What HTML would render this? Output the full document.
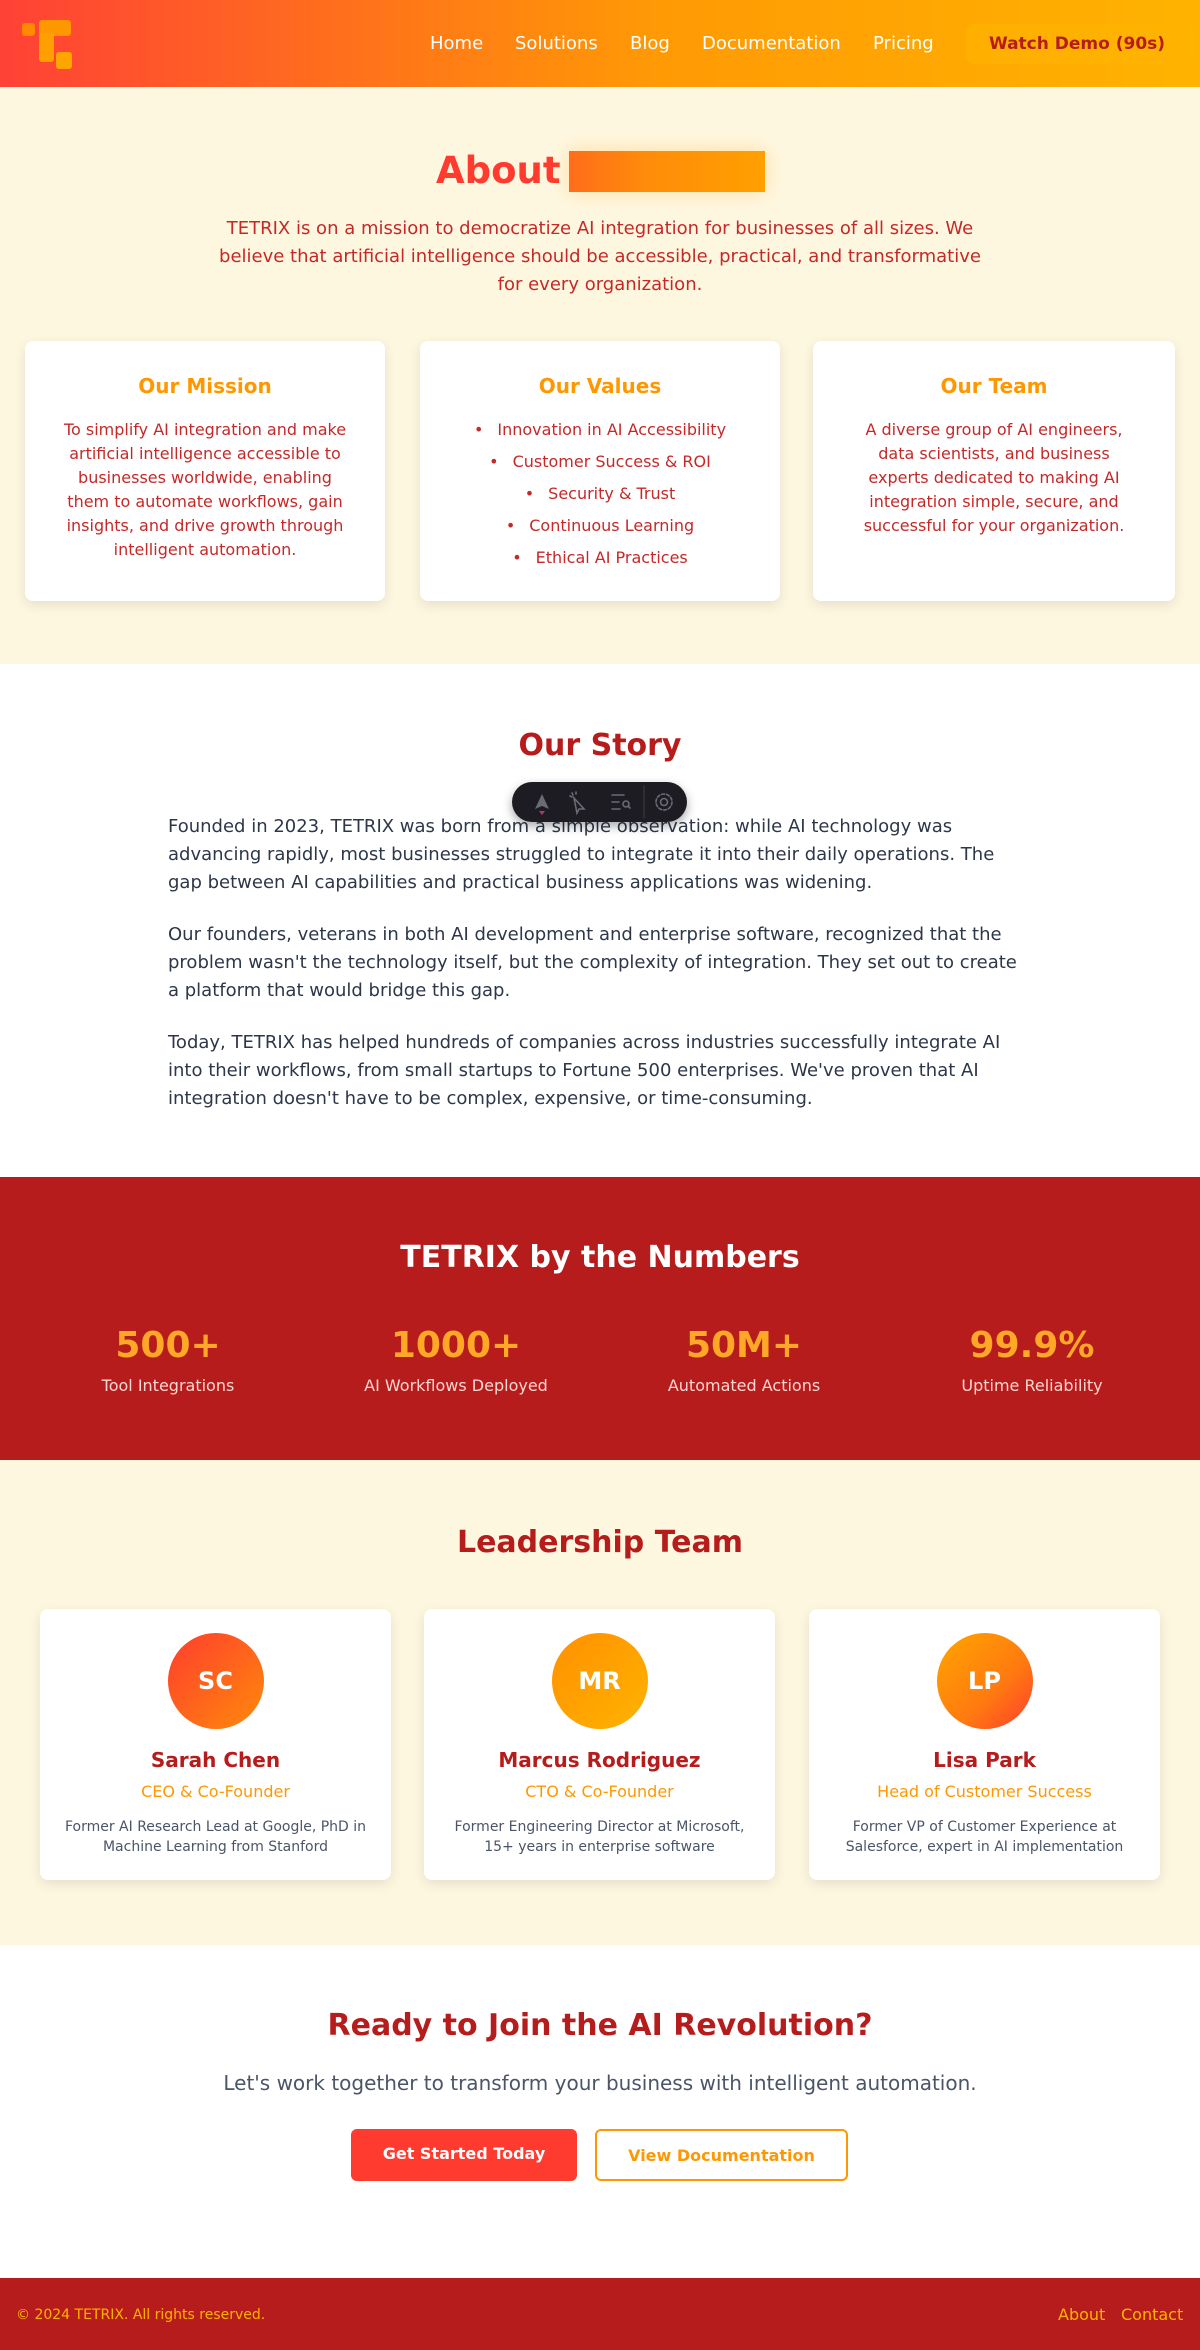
<!DOCTYPE html>
<html><head><meta charset="utf-8"><style>
*{margin:0;padding:0;box-sizing:border-box}
body{width:1200px;height:2350px;font-family:"DejaVu Sans","Liberation Sans",sans-serif;background:#fff;position:relative;overflow:hidden}
.abs{position:absolute}
.c{text-align:center}
header{position:absolute;left:0;top:0;width:1200px;height:87px;background:linear-gradient(90deg,#ff4136 0%,#ff6a1f 25%,#ff9a05 55%,#ffb300 100%);box-shadow:0 2px 6px rgba(0,0,0,.12)}
nav a{position:absolute;top:33px;color:#fff;font-size:18px;text-decoration:none}
.demo{position:absolute;left:966px;top:24px;width:232px;height:40px;border-radius:8px;background:rgba(255,180,0,.55);color:#b71c1c;font-weight:bold;font-size:17px;text-align:center;line-height:40px;padding-right:10px}
.s1{position:absolute;top:87px;left:0;width:1200px;height:577px;background:#fef7e0}
.card{position:absolute;background:#fff;border-radius:8px;box-shadow:0 4px 12px rgba(0,0,0,.1);text-align:center}
.card h3{color:#ff9800;font-size:20px;margin-top:33px}
.card p,.card li{color:#c62828;font-size:16px;line-height:24px}
.card ul{list-style:none}
.card li{line-height:32px}
.card li:before{content:"•";margin-right:14px}
.story p{position:absolute;left:168px;width:860px;font-size:18px;line-height:28px;color:#2d3748}
.num{position:absolute;top:1177px;left:0;width:1200px;height:283px;background:#b71c1c}
.col{position:absolute;top:1322px;width:288px;text-align:center}
.col b{display:block;font-size:36px;color:#ffa726;line-height:48px}
.col span{display:block;color:#ffd6d0;font-size:16px;margin-top:6px}
.s4{position:absolute;top:1460px;left:0;width:1200px;height:485px;background:#fef7e0}
.lc{position:absolute;top:1609px;width:351px;height:271px;background:#fff;border-radius:8px;box-shadow:0 4px 12px rgba(0,0,0,.1);text-align:center}
.av{width:96px;height:96px;border-radius:50%;margin:24px auto 0;color:#fff;font-weight:bold;font-size:24px;line-height:96px}
.lc h4{color:#b71c1c;font-size:20px;margin-top:19px}
.lc .r{color:#ff9800;font-size:16px;margin-top:10px}
.lc .b{color:#4a5568;font-size:14px;line-height:20px;margin-top:16px;padding:0 20px}
footer{position:absolute;top:2278px;left:0;width:1200px;height:72px;background:#b71c1c;color:#ffb300}
h2{position:absolute;left:0;width:1200px;text-align:center;font-size:30px;font-weight:bold}
</style></head><body>
<header>
<svg class="abs" style="left:22px;top:20px" width="54" height="52" viewBox="0 0 54 52">
<rect x="0" y="3" width="13" height="13" rx="3" fill="#ff8a00"/>
<rect x="17" y="0" width="32" height="16" rx="3" fill="#ff9800"/>
<rect x="17" y="13" width="15" height="29" rx="3" fill="#ffa000"/>
<rect x="34" y="32" width="16" height="17" rx="3" fill="#ffa500"/>
</svg>
<nav>
<a style="left:430px">Home</a><a style="left:515px">Solutions</a><a style="left:630px">Blog</a><a style="left:702px">Documentation</a><a style="left:873px">Pricing</a>
</nav>
<div class="demo">Watch Demo (90s)</div>
</header>

<div class="s1"></div>
<div class="abs" style="left:436px;top:149px;font-size:37px;font-weight:bold;color:#ff3b30">About</div>
<div class="abs" style="left:569px;top:151px;width:196px;height:41px;background:linear-gradient(90deg,#ff6d1a,#ff8c0a 40%,#ffa000);box-shadow:0 0 20px rgba(255,160,0,.3)"></div>
<div class="abs c" style="left:215px;top:215px;width:770px;font-size:18px;line-height:28px;color:#c62828">TETRIX is on a mission to democratize AI integration for businesses of all sizes. We believe that artificial intelligence should be accessible, practical, and transformative for every organization.</div>

<div class="card" style="left:25px;top:341px;width:360px;height:260px">
<h3>Our Mission</h3>
<p style="margin:20px 34px 0">To simplify AI integration and make artificial intelligence accessible to businesses worldwide, enabling them to automate workflows, gain insights, and drive growth through intelligent automation.</p>
</div>
<div class="card" style="left:420px;top:341px;width:360px;height:260px">
<h3>Our Values</h3>
<ul style="margin-top:16px"><li>Innovation in AI Accessibility</li><li>Customer Success &amp; ROI</li><li>Security &amp; Trust</li><li>Continuous Learning</li><li>Ethical AI Practices</li></ul>
</div>
<div class="card" style="left:813px;top:341px;width:362px;height:260px">
<h3>Our Team</h3>
<p style="margin:20px 40px 0">A diverse group of AI engineers, data scientists, and business experts dedicated to making AI integration simple, secure, and successful for your organization.</p>
</div>

<h2 style="top:728px;color:#b71c1c">Our Story</h2>
<div class="story">
<p style="top:813px">Founded in 2023, TETRIX was born from a simple observation: while AI technology was advancing rapidly, most businesses struggled to integrate it into their daily operations. The gap between AI capabilities and practical business applications was widening.</p>
<p style="top:921px">Our founders, veterans in both AI development and enterprise software, recognized that the problem wasn't the technology itself, but the complexity of integration. They set out to create a platform that would bridge this gap.</p>
<p style="top:1029px">Today, TETRIX has helped hundreds of companies across industries successfully integrate AI into their workflows, from small startups to Fortune 500 enterprises. We've proven that AI integration doesn't have to be complex, expensive, or time-consuming.</p>
</div>
<div class="abs" style="left:512px;top:782px;width:175px;height:40px;border-radius:20px;background:#1c1c22;box-shadow:0 4px 10px rgba(0,0,0,.35)">
<svg width="175" height="40" viewBox="0 0 175 40" fill="none" stroke="#6b6b74" stroke-width="1.6" stroke-linecap="round">
<path d="M23 27 L30 12 L37 27 L30 24 Z" fill="#6b6b74" stroke="none"/><path d="M27 29 L33 29 L30 33Z" fill="#b03a6a" stroke="none"/>
<path d="M62 16 L72 27 L67 27 L65 31 Z"/><path d="M58 14 l2 1 M60 11 l1 2 M64 10 v2"/>
<path d="M100 13 h12 M100 20 h7 M100 27 h8"/><circle cx="114" cy="22" r="3"/><path d="M116 24 l2 2"/>
<path d="M132 4 V36" stroke="#333"/>
<circle cx="152" cy="20" r="3.5"/><circle cx="152" cy="20" r="8" stroke-dasharray="3 2"/>
</svg></div>

<div class="num"></div>
<h2 style="top:1240px;color:#fff">TETRIX by the Numbers</h2>
<div class="col" style="left:24px"><b>500+</b><span>Tool Integrations</span></div>
<div class="col" style="left:312px"><b>1000+</b><span>AI Workflows Deployed</span></div>
<div class="col" style="left:600px"><b>50M+</b><span>Automated Actions</span></div>
<div class="col" style="left:888px"><b>99.9%</b><span>Uptime Reliability</span></div>

<div class="s4"></div>
<h2 style="top:1525px;color:#b71c1c">Leadership Team</h2>
<div class="lc" style="left:40px"><div class="av" style="background:linear-gradient(135deg,#ff3d2e,#ff8a0a)">SC</div><h4>Sarah Chen</h4><div class="r">CEO &amp; Co-Founder</div><div class="b">Former AI Research Lead at Google, PhD in Machine Learning from Stanford</div></div>
<div class="lc" style="left:424px"><div class="av" style="background:linear-gradient(135deg,#ff9000,#ffb300)">MR</div><h4>Marcus Rodriguez</h4><div class="r">CTO &amp; Co-Founder</div><div class="b">Former Engineering Director at Microsoft, 15+ years in enterprise software</div></div>
<div class="lc" style="left:809px"><div class="av" style="background:linear-gradient(135deg,#ffa500,#ff7a10 60%,#ff3d2e)">LP</div><h4>Lisa Park</h4><div class="r">Head of Customer Success</div><div class="b">Former VP of Customer Experience at Salesforce, expert in AI implementation</div></div>

<h2 style="top:2008px;color:#b71c1c">Ready to Join the AI Revolution?</h2>
<div class="abs c" style="left:0;top:2071px;width:1200px;font-size:20px;color:#4a5568">Let's work together to transform your business with intelligent automation.</div>
<div class="abs c" style="left:351px;top:2129px;width:226px;height:52px;background:#ff3b30;border-radius:6px;color:#fff;font-weight:bold;font-size:16px;line-height:50px">Get Started Today</div>
<div class="abs c" style="left:595px;top:2129px;width:253px;height:52px;border:2px solid #ff9800;border-radius:6px;color:#ff9800;font-weight:bold;font-size:16px;line-height:50px">View Documentation</div>

<footer>
<div class="abs" style="left:16px;top:29px;font-size:14px">© 2024 TETRIX. All rights reserved.</div>
<div class="abs" style="left:1058px;top:27px;font-size:16px">About</div>
<div class="abs" style="left:1121px;top:27px;font-size:16px">Contact</div>
</footer>
</body></html>
